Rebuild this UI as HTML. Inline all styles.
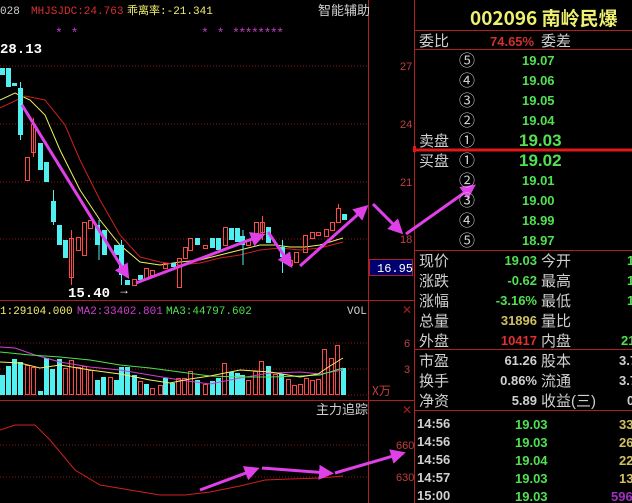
<!DOCTYPE html>
<html><head><meta charset="utf-8"><style>
html,body{margin:0;padding:0;background:#000;width:632px;height:503px;overflow:hidden}
svg{display:block}
text{font-family:"Liberation Sans","Noto Sans CJK SC",sans-serif}
.m{font-family:"Liberation Mono","Noto Sans CJK SC",monospace}
.c{font-family:"Noto Sans CJK SC","WenQuanYi Zen Hei",sans-serif}
</style></head><body>
<svg width="632" height="503" viewBox="0 0 632 503" xmlns="http://www.w3.org/2000/svg">
<defs>
<marker id="ah" markerWidth="5" markerHeight="5" refX="3" refY="2.5" orient="auto" markerUnits="strokeWidth"><path d="M0,0 L5,2.5 L0,5 z" fill="#e040e8"/></marker>
</defs>
<rect width="632" height="503" fill="#000"/>
<g stroke="#8a1818" stroke-dasharray="1,2" stroke-width="1">
<line x1="0" y1="66" x2="368" y2="66"/><line x1="0" y1="124" x2="368" y2="124"/>
<line x1="0" y1="182" x2="368" y2="182"/><line x1="0" y1="239" x2="368" y2="239"/>
<line x1="0" y1="343" x2="368" y2="343"/><line x1="0" y1="369" x2="368" y2="369"/>
<line x1="0" y1="395" x2="368" y2="395"/>
<line x1="0" y1="445" x2="368" y2="445"/><line x1="0" y1="477" x2="368" y2="477"/>
</g>
<g stroke="#b02020" stroke-width="1">
<line x1="368.5" y1="0" x2="368.5" y2="503"/>
<line x1="414.5" y1="0" x2="414.5" y2="503"/>
<line x1="0" y1="300.5" x2="414" y2="300.5"/>
<line x1="0" y1="400.5" x2="414" y2="400.5"/>
<line x1="415" y1="30.5" x2="632" y2="30.5"/>
<line x1="415" y1="49.5" x2="632" y2="49.5"/>
<line x1="415" y1="250.5" x2="632" y2="250.5"/>
<line x1="415" y1="349.5" x2="632" y2="349.5"/>
<line x1="415" y1="410.5" x2="632" y2="410.5"/>
</g>
<line x1="415" y1="150" x2="632" y2="150" stroke="#e01818" stroke-width="3"/>
<rect x="413" y="146" width="3" height="6" fill="#e01818"/>
<text x="0" y="14" font-size="11" fill="#d0d0d0" class="m">028</text>
<text x="31" y="14" font-size="11" fill="#d83030" class="m">MHJSJDC:24.763</text>
<text x="127" y="14" font-size="11" fill="#f0f070" class="m">乖离率:-21.341</text>
<text x="318" y="15" font-size="13" fill="#d0d0d0" class="c">智能辅助</text>
<text x="55" y="37" font-size="13" fill="#c040c0" class="m">* *</text>
<text x="201" y="37" font-size="13" fill="#c040c0" class="m">* * </text>
<text x="232" y="37" font-size="13" fill="#c040c0" class="m" textLength="52">********</text>
<text x="0" y="53" font-size="14" font-weight="bold" fill="#fff" class="m">28.13</text>
<text x="68" y="297" font-size="14" font-weight="bold" fill="#fff" class="m">15.40</text>
<text x="118" y="294" font-size="12" fill="#fff">→</text>
<g font-size="11" fill="#c04040" class="m">
<text x="400" y="70">27</text><text x="400" y="128">24</text><text x="400" y="186">21</text><text x="400" y="243">18</text>
<text x="404" y="347">6</text><text x="404" y="373">3</text>
<text x="396" y="449">660</text><text x="396" y="481">630</text>
</g>
<text x="372" y="395" font-size="12" fill="#c04040" class="c">X万</text>
<text x="402" y="314" font-size="12" fill="#a02020">✕</text>
<text x="402" y="414" font-size="12" fill="#a02020">✕</text>
<rect x="369.5" y="259.5" width="43" height="16" fill="#000070" stroke="#b02020"/>
<text x="377" y="272" font-size="12" fill="#fff" class="m">16.95</text>
<polyline fill="none" stroke="#f0f060" stroke-width="1" points="0,100 15,93 30,100 45,115 60,150 80,190 100,220 120,245 140,262 160,265 180,262 200,260 220,255 240,250 260,245 275,245 290,247 305,247 320,245 343,238"/>
<polyline fill="none" stroke="#d02020" stroke-width="1" points="0,108 25,96 45,100 65,125 80,160 100,200 120,235 140,257 160,262 180,265 200,263 220,258 240,255 260,250 280,248 300,250 320,248 343,242"/>
<g fill="#50f0f0">
<rect x="0" y="68" width="5" height="7"/><rect x="6" y="68" width="5" height="19"/><rect x="12" y="83" width="5" height="3"/><rect x="18" y="88" width="5" height="47"/>
<rect x="38" y="143" width="5" height="27"/><rect x="44" y="162" width="5" height="20"/><rect x="51" y="201" width="5" height="21"/><rect x="57" y="225" width="5" height="20"/><rect x="63" y="240" width="5" height="18"/>
<rect x="95" y="225" width="5" height="20"/><rect x="102" y="230" width="5" height="25"/><rect x="114" y="245" width="5" height="10"/><rect x="119" y="245" width="5" height="30"/><rect x="125" y="280" width="5" height="5"/><rect x="138" y="275" width="5" height="5"/>
<rect x="171" y="263" width="5" height="4"/><rect x="195" y="238" width="5" height="7"/><rect x="210" y="238" width="5" height="10"/><rect x="216" y="238" width="5" height="12"/>
<rect x="229" y="228" width="5" height="12"/><rect x="235" y="228" width="5" height="14"/><rect x="240" y="236" width="5" height="9"/><rect x="266" y="227" width="5" height="16"/><rect x="280" y="247" width="5" height="10"/><rect x="342" y="214" width="5" height="6"/>
</g>
<g stroke="#50f0f0" stroke-width="1">
<line x1="20.5" y1="82" x2="20.5" y2="140"/><line x1="53.5" y1="190" x2="53.5" y2="225"/><line x1="121.5" y1="240" x2="121.5" y2="285"/><line x1="243" y1="230" x2="243" y2="265"/><line x1="282.5" y1="240" x2="282.5" y2="273"/><line x1="99" y1="220" x2="99" y2="260"/>
</g>
<g fill="none" stroke="#ff4848" stroke-width="1">
<rect x="25.5" y="157.5" width="4" height="23"/><rect x="31.5" y="124.5" width="4" height="28"/><rect x="69.5" y="238.5" width="4" height="39"/><rect x="76.5" y="237.5" width="4" height="13"/><rect x="82.5" y="222.5" width="4" height="33"/><rect x="88.5" y="220.5" width="4" height="8"/>
<rect x="132.5" y="279.5" width="4" height="6"/><rect x="144.5" y="268.5" width="4" height="10"/><rect x="150.5" y="270.5" width="4" height="5"/><rect x="163.5" y="263.5" width="4" height="5"/><rect x="177.5" y="258.5" width="4" height="29"/><rect x="183.5" y="247.5" width="4" height="11"/><rect x="188.5" y="238.5" width="4" height="12"/>
<rect x="203.5" y="245.5" width="4" height="3"/><rect x="223.5" y="227.5" width="4" height="18"/><rect x="246.5" y="240.5" width="4" height="5"/><rect x="254.5" y="222.5" width="4" height="18"/><rect x="260.5" y="222.5" width="4" height="10"/>
<rect x="288.5" y="260.5" width="4" height="5"/><rect x="294.5" y="252.5" width="4" height="10"/><rect x="303.5" y="235.5" width="4" height="17"/><rect x="310.5" y="232.5" width="4" height="6"/><rect x="316.5" y="232.5" width="4" height="3"/><rect x="324.5" y="229.5" width="4" height="7"/><rect x="330.5" y="222.5" width="4" height="8"/><rect x="336.5" y="208.5" width="4" height="14"/>
<line x1="71.5" y1="230" x2="71.5" y2="285"/><line x1="33.5" y1="118" x2="33.5" y2="157"/><line x1="262.5" y1="216" x2="262.5" y2="240"/><line x1="338.5" y1="204" x2="338.5" y2="208"/>
</g>
<g stroke="#e040e8" stroke-width="3" fill="none" marker-end="url(#ah)">
<line x1="22" y1="105" x2="126" y2="274"/>
<line x1="136" y1="283" x2="260" y2="236"/>
<line x1="268" y1="232" x2="289" y2="263"/>
<line x1="300" y1="266" x2="364" y2="209"/>
<line x1="373" y1="204" x2="399" y2="230"/>
<line x1="406" y1="234" x2="471" y2="188"/>
</g>
<text x="0" y="314" font-size="11" fill="#f0f070" class="m">1:29104.000</text>
<text x="77" y="314" font-size="11" fill="#d040d0" class="m">MA2:33402.801</text>
<text x="166" y="314" font-size="11" fill="#50e050" class="m">MA3:44797.602</text>
<text x="347" y="314" font-size="11" fill="#d0d0d0" class="m">VOL</text>
<g fill="#50f0f0">
<rect x="0" y="375" width="5" height="20"/><rect x="6" y="366" width="5" height="29"/><rect x="12" y="359" width="5" height="36"/><rect x="18" y="362" width="5" height="33"/>
<rect x="38" y="391" width="5" height="4"/><rect x="44" y="358" width="5" height="37"/><rect x="50" y="369" width="5" height="26"/><rect x="57" y="359" width="5" height="36"/>
<rect x="95" y="380" width="5" height="15"/><rect x="101" y="377" width="5" height="18"/><rect x="114" y="380" width="5" height="15"/><rect x="119" y="367" width="5" height="28"/><rect x="125" y="367" width="5" height="28"/><rect x="132" y="375" width="5" height="20"/><rect x="144" y="384" width="5" height="11"/>
<rect x="163" y="378" width="5" height="17"/><rect x="170" y="383" width="5" height="12"/><rect x="195" y="380" width="5" height="15"/><rect x="210" y="381" width="5" height="14"/><rect x="216" y="378" width="5" height="17"/>
<rect x="229" y="372" width="5" height="23"/><rect x="235" y="373" width="5" height="22"/><rect x="240" y="375" width="5" height="20"/><rect x="266" y="366" width="5" height="29"/><rect x="279" y="374" width="5" height="21"/><rect x="341" y="368" width="5" height="27"/>
</g>
<g fill="none" stroke="#ff4848" stroke-width="1">
<rect x="25.5" y="365.5" width="4" height="29"/><rect x="31.5" y="367.5" width="4" height="27"/><rect x="63.5" y="368.5" width="4" height="26"/><rect x="69.5" y="360.5" width="4" height="34"/><rect x="76.5" y="367.5" width="4" height="27"/><rect x="82.5" y="366.5" width="4" height="28"/><rect x="88.5" y="370.5" width="4" height="24"/>
<rect x="108.5" y="377.5" width="4" height="17"/><rect x="138.5" y="381.5" width="4" height="13"/><rect x="150.5" y="388.5" width="4" height="6"/><rect x="158.5" y="385.5" width="4" height="9"/><rect x="176.5" y="378.5" width="4" height="16"/><rect x="182.5" y="378.5" width="4" height="16"/><rect x="188.5" y="371.5" width="4" height="23"/>
<rect x="203.5" y="384.5" width="4" height="10"/><rect x="222.5" y="363.5" width="4" height="31"/><rect x="246.5" y="380.5" width="4" height="14"/><rect x="253.5" y="371.5" width="4" height="23"/><rect x="259.5" y="361.5" width="4" height="33"/><rect x="273.5" y="374.5" width="4" height="20"/>
<rect x="286.5" y="379.5" width="4" height="15"/><rect x="292.5" y="385.5" width="4" height="9"/><rect x="298.5" y="384.5" width="4" height="10"/><rect x="304.5" y="378.5" width="4" height="16"/><rect x="310.5" y="380.5" width="4" height="14"/><rect x="316.5" y="379.5" width="4" height="15"/><rect x="322.5" y="349.5" width="4" height="45"/><rect x="329.5" y="358.5" width="4" height="36"/><rect x="335.5" y="345.5" width="4" height="49"/>
</g>
<polyline fill="none" stroke="#d040d0" points="0,347 15,348 35,355 60,362 90,367 120,370 150,375 180,380 210,384 240,378 270,373 300,372 320,374 343,370"/>
<polyline fill="none" stroke="#50e050" points="0,352 30,355 60,357 90,360 120,365 150,368 180,372 210,376 240,377 270,377 300,376 320,375 343,368"/>
<polyline fill="none" stroke="#f0f060" points="0,362 20,363 40,368 60,365 90,370 120,374 150,380 170,383 190,379 210,376 240,370 270,372 300,377 318,374 330,366 343,358"/>
<text x="316" y="414" font-size="13" fill="#d0d0d0" class="c">主力追踪</text>
<polyline fill="none" stroke="#d02020" stroke-width="1" points="0,430 15,425 35,425 50,440 75,470 100,485 130,490 160,495 185,495 210,492 240,486 265,480 290,479 320,478 343,476"/>
<g stroke="#e040e8" stroke-width="3" fill="none" marker-end="url(#ah)">
<line x1="200" y1="490" x2="254" y2="470"/>
<line x1="262" y1="468" x2="328" y2="473"/>
<line x1="335" y1="473" x2="400" y2="454"/>
</g>
<text x="470" y="25" font-size="19" font-weight="bold" fill="#f0f070" class="c">002096  南岭民爆</text>
<g font-size="15" fill="#d0d0d0" class="c">
<text x="419" y="46">委比</text><text x="541" y="46">委差</text>
<text x="419" y="146">卖盘</text><text x="419" y="166">买盘</text>
<text x="419" y="266">现价</text><text x="541" y="266">今开</text>
<text x="419" y="286">涨跌</text><text x="541" y="286">最高</text>
<text x="419" y="306">涨幅</text><text x="541" y="306">最低</text>
<text x="419" y="326">总量</text><text x="541" y="326">量比</text>
<text x="419" y="346">外盘</text><text x="541" y="346">内盘</text>
<text x="419" y="366">市盈</text><text x="541" y="366">股本</text>
<text x="419" y="386">换手</text><text x="541" y="386">流通</text>
<text x="419" y="406">净资</text><text x="541" y="406">收益(三)</text>
</g>
<text x="490" y="46" font-size="13" font-weight="bold" fill="#d03030">74.65%</text>
<g font-size="16" fill="#d0d0d0" class="c">
<text x="459" y="66">⑤</text><text x="459" y="86">④</text><text x="459" y="106">③</text><text x="459" y="126">②</text><text x="459" y="146">①</text>
<text x="459" y="166">①</text><text x="459" y="186">②</text><text x="459" y="206">③</text><text x="459" y="226">④</text><text x="459" y="246">⑤</text>
</g>
<g font-size="13" font-weight="bold" fill="#50e050">
<text x="522" y="65">19.07</text><text x="522" y="85">19.06</text><text x="522" y="105">19.05</text><text x="522" y="125">19.04</text>
<text x="522" y="185">19.01</text><text x="522" y="205">19.00</text><text x="522" y="225">18.99</text><text x="522" y="245">18.97</text>
<text x="519" y="146" font-size="17">19.03</text><text x="519" y="166" font-size="17">19.02</text>
</g>
<g font-size="13" font-weight="bold" text-anchor="end">
<text x="537" y="265" fill="#50e050">19.03</text>
<text x="537" y="285" fill="#50e050">-0.62</text>
<text x="537" y="305" fill="#50e050">-3.16%</text>
<text x="537" y="325" fill="#d0c060">31896</text>
<text x="537" y="345" fill="#e03030">10417</text>
<text x="537" y="365" fill="#d0d0d0">61.26</text>
<text x="537" y="385" fill="#d0d0d0">0.86%</text>
<text x="537" y="405" fill="#d0d0d0">5.89</text>
</g>
<g font-size="13" font-weight="bold">
<text x="627" y="265" fill="#50e050">1</text><text x="627" y="285" fill="#50e050">1</text><text x="627" y="305" fill="#50e050">1</text>
<text x="621" y="345" fill="#50e050">21</text><text x="619" y="365" fill="#d0d0d0">3.7</text><text x="619" y="385" fill="#d0d0d0">3.7</text><text x="627" y="405" fill="#d0d0d0">0</text>
</g>
<g font-size="13" font-weight="bold" fill="#d0d0d0">
<text x="417" y="428">14:56</text><text x="417" y="446">14:56</text><text x="417" y="464">14:56</text><text x="417" y="482">14:57</text><text x="417" y="500">15:00</text>
</g>
<g font-size="13" font-weight="bold" fill="#50e050">
<text x="515" y="429">19.03</text><text x="515" y="447">19.03</text><text x="515" y="465">19.04</text><text x="515" y="483">19.03</text><text x="515" y="501">19.03</text>
</g>
<g font-size="13" font-weight="bold" fill="#d0c060">
<text x="619" y="429">33</text><text x="619" y="447">26</text><text x="619" y="465">22</text><text x="619" y="483">13</text>
</g>
<text x="611" y="501" font-size="13" font-weight="bold" fill="#a030c0">596</text>
</svg>
</body></html>
